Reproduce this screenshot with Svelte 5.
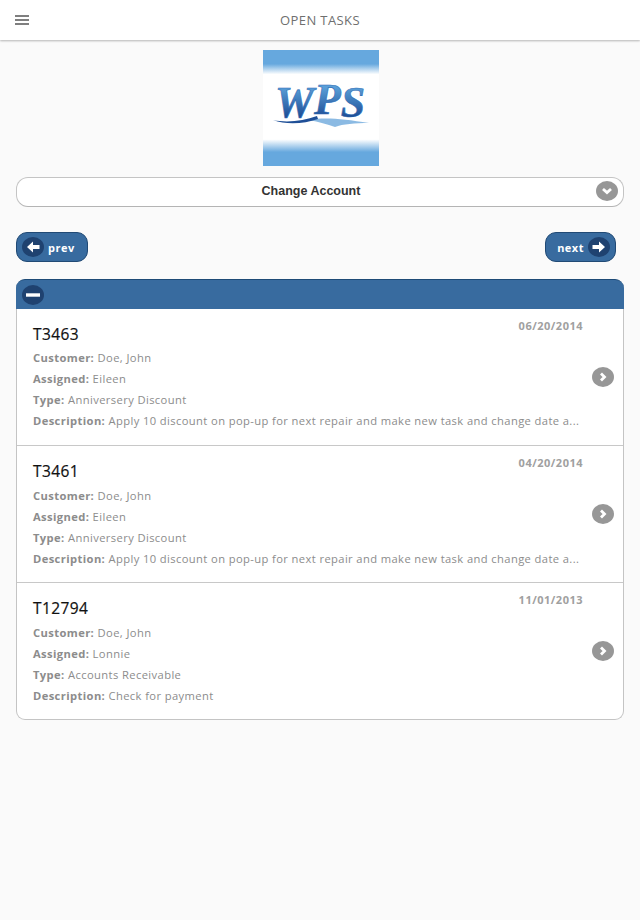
<script>
  const longDescription = 'Apply 10 discount on pop-up for next repair and make new task and change date a...';
  const tasks = [
    { id: 'T3463', date: '06/20/2014', customer: 'Doe, John', assigned: 'Eileen', type: 'Anniversery Discount', description: longDescription },
    { id: 'T3461', date: '04/20/2014', customer: 'Doe, John', assigned: 'Eileen', type: 'Anniversery Discount', description: longDescription },
    { id: 'T12794', date: '11/01/2013', customer: 'Doe, John', assigned: 'Lonnie', type: 'Accounts Receivable', description: 'Check for payment' }
  ];
</script>

<div class="page">
  <header class="topbar">
    <button class="menu" aria-label="Menu">
      <svg width="14" height="10" viewBox="0 0 14 10"><path d="M0 1h14M0 5h14M0 9h14" stroke="#555" stroke-width="1.4" fill="none"/></svg>
    </button>
    <h1>OPEN TASKS</h1>
  </header>

  <main class="content">
    <div class="logo">
      <svg width="116" height="116" viewBox="0 0 116 116">
        <defs>
          <linearGradient id="bg" x1="0" y1="0" x2="0" y2="1">
            <stop offset="0.12" stop-color="#66a8de"/>
            <stop offset="0.21" stop-color="#ffffff"/>
            <stop offset="0.77" stop-color="#ffffff"/>
            <stop offset="0.88" stop-color="#66a8de"/>
          </linearGradient>
          <linearGradient id="ink" x1="0" y1="0" x2="0" y2="1">
            <stop offset="0.25" stop-color="#5a9fd8"/>
            <stop offset="0.8" stop-color="#1f4f97"/>
          </linearGradient>
        </defs>
        <rect width="116" height="116" fill="url(#bg)"/>
        <text x="12" y="67" class="wps" fill="url(#ink)" stroke="#2f6db5" stroke-width="0.6" textLength="90" lengthAdjust="spacingAndGlyphs">W<tspan dy="-3">P</tspan><tspan dy="3">S</tspan></text>
        <path d="M46 70c16-3 34-1 60 3-14 0-26 1-34 4-8-3-16-5-26-7z" fill="#6ea9dc" opacity=".8"/>
        <path d="M10 70c14 3 30 1 44-4l1 3c-14 5-32 6-45 1z" fill="#1f4f97"/>
      </svg>
    </div>

    <button class="select">
      <span>Change Account</span>
      <span class="disc select-icon">
        <svg width="12" height="8" viewBox="0 0 12 8"><path d="M2 2l4 3.6L10 2" stroke="#fff" stroke-width="2.8" fill="none"/></svg>
      </span>
    </button>

    <nav class="pager">
      <button class="pill">
        <span class="disc dark">
          <svg width="14" height="12" viewBox="0 0 14 12"><path d="M1 6l6-5.500v3.500h6.500v4H7v3.500z" fill="#fff"/></svg>
        </span>
        prev
      </button>
      <button class="pill next">
        next
        <span class="disc dark">
          <svg width="14" height="12" viewBox="0 0 14 12"><path d="M13 6L7 .5V4H.5v4H7v3.500z" fill="#fff"/></svg>
        </span>
      </button>
    </nav>

    <section class="list">
      <div class="list-head">
        <span class="disc dark">
          <svg width="14" height="4" viewBox="0 0 14 4"><path d="M0 2h14" stroke="#fff" stroke-width="3.400"/></svg>
        </span>
      </div>
      <div class="list-body">
        {#each tasks as t}
          <article class="row">
            <div class="date">{t.date}</div>
            <h2>{t.id}</h2>
            <p><b>Customer:</b> {t.customer}</p>
            <p><b>Assigned:</b> {t.assigned}</p>
            <p><b>Type:</b> {t.type}</p>
            <p><b>Description:</b> {t.description}</p>
            <span class="disc go">
              <svg width="8" height="10" viewBox="0 0 8 10"><path d="M2 1.500L5.500 5 2 8.500" stroke="#fff" stroke-width="2.800" fill="none"/></svg>
            </span>
          </article>
        {/each}
      </div>
    </section>
  </main>
</div>

<style>
  :global(body) {
    margin: 0;
    background: #fafafa;
    font-family: "Open Sans", "Liberation Sans", sans-serif;
  }
  .page {
    width: 640px;
    height: 920px;
    overflow: hidden;
    background: #fafafa;
  }
  button {
    font: inherit;
    padding: 0;
    border: 0;
    background: none;
  }
  .topbar {
    position: relative;
    height: 40px;
    background: #fff;
    box-shadow: 0 1px 2px rgba(0, 0, 0, 0.28);
    display: flex;
    align-items: center;
    justify-content: center;
  }
  .menu {
    position: absolute;
    left: 15px;
    top: 15px;
    width: 14px;
    height: 10px;
    display: block;
    line-height: 0;
  }
  h1 {
    margin: 0;
    font-size: 13px;
    font-weight: 400;
    color: #6f6f6f;
    letter-spacing: 0.4px;
  }
  .content {
    padding: 10px 16px 0;
  }
  .logo {
    width: 116px;
    height: 116px;
    margin: 0 auto;
    transform: translateX(1px);
    line-height: 0;
  }
  .wps {
    font-family: "Liberation Serif", serif;
    font-style: italic;
    font-weight: 700;
    font-size: 45px;
  }
  .disc {
    display: flex;
    align-items: center;
    justify-content: center;
    border-radius: 50%;
    flex: none;
  }
  .select {
    position: relative;
    box-sizing: border-box;
    width: 608px;
    height: 30px;
    margin-top: 11px;
    background: #fff;
    border: 1px solid #c4c4c4;
    border-bottom-color: #b4b4b4;
    border-radius: 12px;
    display: flex;
    align-items: center;
    justify-content: center;
    padding: 0 18px 2px 0;
    font-family: "Liberation Sans", sans-serif;
    font-size: 12.500px;
    font-weight: 700;
    color: #333;
  }
  .select-icon {
    position: absolute;
    right: 5px;
    top: 3px;
    width: 22px;
    height: 20px;
    background: #979797;
  }
  .pager {
    display: flex;
    justify-content: space-between;
    margin-top: 25px;
    padding-right: 8px;
  }
  .pill {
    box-sizing: border-box;
    width: 72px;
    height: 30px;
    background: #386b9f;
    border: 1px solid #214a75;
    border-radius: 11px;
    color: #fff;
    font-size: 11px;
    font-weight: 700;
    letter-spacing: 0.5px;
    display: flex;
    align-items: center;
    gap: 4px;
    padding-left: 5px;
  }
  .pill.next {
    width: 71px;
    justify-content: flex-end;
    padding: 0 5px 0 0;
  }
  .dark {
    width: 22px;
    height: 20px;
    background: #1f4270;
  }
  .list {
    margin-top: 17px;
    width: 608px;
  }
  .list-head {
    box-sizing: border-box;
    height: 30px;
    background: #386b9f;
    border-top: 1px solid #1d4a76;
    border-radius: 9px 9px 0 0;
    display: flex;
    align-items: center;
    padding-left: 6px;
  }
  .list-body {
    box-sizing: border-box;
    height: 411px;
    background: #fff;
    border: 1px solid #c4c4c4;
    border-top: 0;
    border-radius: 0 0 9px 9px;
  }
  .row {
    position: relative;
    box-sizing: border-box;
    height: 137px;
    padding: 15px 16px 0;
    border-top: 1px solid #c8c8c8;
  }
  .row:first-of-type {
    border-top: 0;
    height: 136px;
  }
  h2 {
    margin: 0 0 3.500px;
    font-size: 15.500px;
    line-height: 20px;
    font-weight: 400;
    letter-spacing: 0.4px;
    color: #111;
    -webkit-text-stroke: 0.2px #111;
  }
  .row:first-of-type h2 {
    margin-bottom: 2.800px;
  }
  .date {
    position: absolute;
    right: 40px;
    top: 9px;
    font-size: 11px;
    font-weight: 700;
    letter-spacing: 0.500px;
    color: #a0a0a0;
  }
  p {
    margin: 0;
    font-size: 11.200px;
    line-height: 21.200px;
    letter-spacing: 0.390px;
    white-space: nowrap;
    color: #8c8c8c;
  }
  p b {
    font-weight: 700;
    color: #8c8c8c;
  }
  .go {
    position: absolute;
    right: 9px;
    top: 58px;
    width: 22px;
    height: 20px;
    background: #979797;
  }
</style>
